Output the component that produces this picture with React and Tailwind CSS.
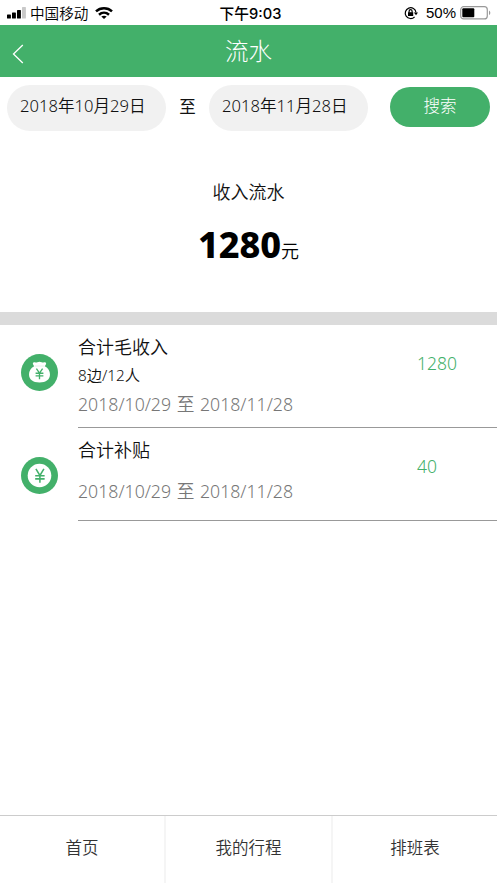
const records = [
  {
    title: '合计毛收入',
    detail: '8边/12人',
    range: '2018/10/29 至 2018/11/28',
    amount: '1280',
    icon: BagIcon,
  },
  {
    title: '合计补贴',
    range: '2018/10/29 至 2018/11/28',
    amount: '40',
    icon: CoinIcon,
  },
]

const tabs = ['首页', '我的行程', '排班表']

function BagIcon() {
  return (
    <svg viewBox="0 0 36 36" className="size-[37px]">
      <circle cx="18" cy="18" r="18" fill="#43b06a" />
      <path
        d="M12 8.300c1.600-1 2.800.4 4-.2 1.300-.7 2.600-.7 4 0 1.200.6 2.400-.8 4 .2 1 .7.300 1.900-.8 3.500 3.300 1.700 5 4.500 5 8 0 5.200-3.700 8-10.200 8s-10.200-2.800-10.200-8c0-3.500 1.700-6.300 5-8-1.100-1.600-1.800-2.800-.8-3.500z"
        fill="#fff"
      />
      <path d="M13.200 11.700h9.600" stroke="#d3ecdc" strokeWidth=".6" />
      <path d="M15 14.300l3 4.200 3-4.200M18 18.500V24.500M14.200 18.700h7.600M14.200 21.300h7.600" fill="none" stroke="#43b06a" strokeWidth="1.300" />
    </svg>
  )
}

function CoinIcon() {
  return (
    <svg viewBox="0 0 36 36" className="size-[37px]">
      <circle cx="18" cy="18" r="18" fill="#43b06a" />
      <circle cx="18" cy="18" r="11.500" fill="#fff" />
      <path d="M14.500 11.500l3.900 6.500 3.900-6.500M18.400 18v7M13.800 18.300H23M13.800 21.300H23" fill="none" stroke="#43b06a" strokeWidth="1.500" />
    </svg>
  )
}

function StatusBar() {
  return (
    <div className="grid h-[25px] shrink-0 grid-cols-[1fr_auto_1fr] items-center pt-px text-black">
      <div className="flex items-center pl-[7px]">
        <svg viewBox="0 0 19 12" className="h-3 w-[19px]">
          <rect x="0" y="7.500" width="3.900" height="4" rx=".6" />
          <rect x="5" y="5.500" width="3.900" height="6" rx=".6" />
          <rect x="10" y="3" width="3.900" height="8.500" rx=".6" />
          <rect x="15" y="0" width="3.900" height="11.500" rx=".6" fill="#c9c9c9" />
        </svg>
        <span className="ml-[4px] text-[14.600px] leading-[20px] font-[350]">中国移动</span>
        <svg viewBox="0 0 18 12" className="ml-[7px] h-3 w-[18px]" fill="none" stroke="#000" strokeWidth="2.500">
          <path d="M1 4.400c4.500-4.200 11.500-4.200 16 0" />
          <path d="M4 7.700c2.900-2.600 7.100-2.600 10 0" />
          <path d="M6.300 9.600c1.600-1.300 3.800-1.300 5.400 0L9 12z" fill="#000" stroke="none" />
        </svg>
      </div>
      <div className="pt-px pl-1 font-['Inter','Noto_Sans_CJK_SC',sans-serif] text-[14.700px] leading-[20px] font-medium">下午9:03</div>
      <div className="flex items-center justify-end pr-[6px]">
        <svg viewBox="0 0 14 14" className="size-[14px]" fill="none" stroke="#000" strokeWidth="1.200">
          <path d="M10.600 10.800A5.400 5.400 0 1 1 12 6.500" />
          <path d="M9.900 6.600H14L12 9.200z" fill="#000" stroke="none" />
          <rect x="4" y="6.200" width="5.200" height="3.800" fill="#000" stroke="none" />
          <path d="M5.100 6.500V5.200a1.500 1.500 0 0 1 3 0v1.300" />
        </svg>
        <span className="ml-2 font-['Liberation_Sans',sans-serif] text-[15px] leading-[20px]">50%</span>
        <svg viewBox="0 0 31 14" className="ml-[4px] h-[14px] w-[31px]">
          <rect x=".7" y=".7" width="26.600" height="12.200" rx="3" fill="none" stroke="#999" strokeWidth="1.200" />
          <rect x="2.300" y="2.300" width="12" height="9" rx="1" />
          <path d="M29 4.500c1.800.8 1.800 3.800 0 4.600z" fill="#999" />
        </svg>
      </div>
    </div>
  )
}

function DateField({ children }) {
  return (
    <div className="h-[46px] w-[159px] rounded-full bg-[#f1f1f1] pl-[13px] text-[16.600px] leading-[42px] font-[350] whitespace-nowrap">
      {children}
    </div>
  )
}

export default function App() {
  return (
    <div className="flex h-[883px] w-[497px] flex-col overflow-hidden bg-white font-['Noto_Sans','Noto_Sans_CJK_SC',sans-serif] text-[#111]">
      <StatusBar />

      {/* Title bar */}
      <header className="grid h-[52px] shrink-0 grid-cols-[1fr_auto_1fr] items-center bg-[#43b06a] text-white">
        <svg viewBox="0 0 12 20" className="mt-[6px] ml-3 h-5 w-3" fill="none" stroke="#fff" strokeWidth="1.300">
          <path d="M10.800 1L1.500 10l9.300 9" />
        </svg>
        <h1 className="pb-px text-[23.500px] leading-[50px] font-light">流水</h1>
      </header>

      {/* Date range */}
      <div className="flex h-[61px] shrink-0 items-center px-[7px]">
        <DateField>2018年10月29日</DateField>
        <span className="w-[43px] pb-px text-center text-[16.500px]">至</span>
        <DateField>2018年11月28日</DateField>
        <button className="mb-px ml-auto h-10 w-[100px] rounded-full bg-[#43b06a] pb-[2px] text-[16.500px] font-light text-white">搜索</button>
      </div>

      {/* Total */}
      <section className="flex h-[174px] shrink-0 flex-col items-center pt-[40px]">
        <h2 className="text-[18px] leading-[28px] font-[350]">收入流水</h2>
        <p className="mt-[15px] flex items-baseline leading-[48px] text-black">
          <span className="text-[36px] font-extrabold">1280</span>
          <span className="text-[18px] font-[350]">元</span>
        </p>
      </section>
      <div className="h-[13px] shrink-0 bg-[#dbdbdb]" />

      <ul className="flex-1">
        {records.map(({ title, detail, range, amount, icon: Icon }) => (
          <li key={title} className="flex">
            <div className="w-[78px] pt-[29px] pl-[21px]">
              <Icon />
            </div>
            <div className={`flex flex-1 border-b border-[#999] ${detail ? 'h-[103px]' : 'h-[93px]'}`}>
              <div className="w-[339px] pt-[8px]">
                <h3 className="text-[18px] leading-[28px] font-[350]">{title}</h3>
                {detail && <p className="text-[15.300px] leading-[29px] font-[350]">{detail}</p>}
                <p className={`text-[17.700px] leading-[28px] font-[350] [word-spacing:1px] text-[#777] ${detail ? '' : 'mt-[13px]'}`}>{range}</p>
              </div>
              <span className="pt-[24px] text-[17.500px] leading-[28px] font-[350] text-[#43b06a]">{amount}</span>
            </div>
          </li>
        ))}
      </ul>

      {/* Bottom tabs */}
      <nav className="grid h-[68px] shrink-0 grid-cols-[166px_167px_1fr] border-t border-[#ccc] text-center text-[16.500px] leading-[64px] font-[350] text-[#333]">
        {tabs.map((tab) => (
          <a key={tab} className="border-r-2 border-[#f5f5f5] last:border-r-0">{tab}</a>
        ))}
      </nav>
    </div>
  )
}
